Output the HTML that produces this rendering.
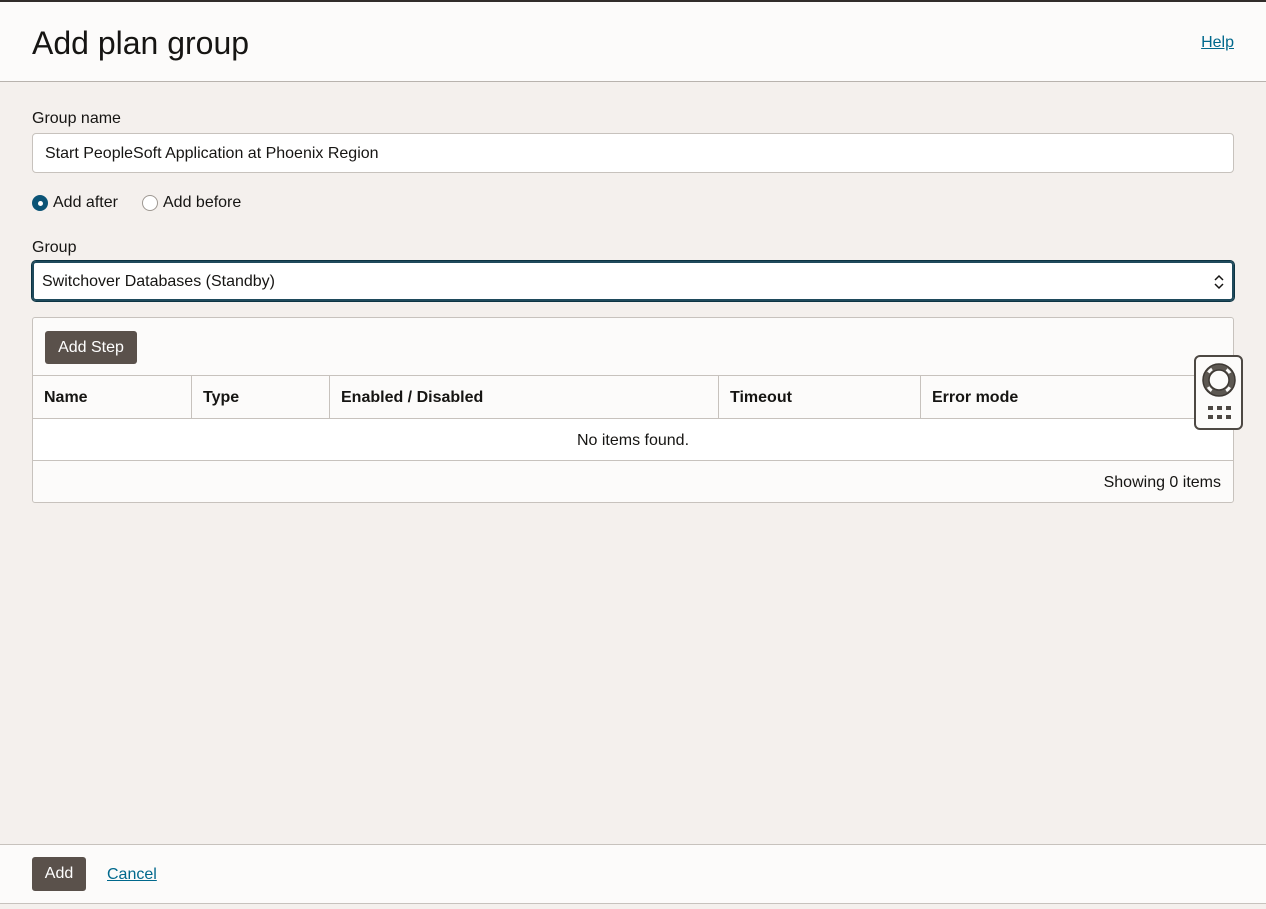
<!DOCTYPE html>
<html><head><style>
*{box-sizing:border-box;margin:0;padding:0}
body{width:1266px;height:909px;background:#f4f0ed;font-family:"Liberation Sans",sans-serif;color:#161513;position:relative;overflow:hidden;font-size:16px}
.top{position:absolute;top:0;left:0;width:1266px;height:2px;background:#312d2a}
.hdr{position:absolute;top:2px;left:0;width:1266px;height:80px;background:#fcfbfa;border-bottom:1px solid #b8b3ae}
.hdr h1{position:absolute;left:32px;top:23px;font-size:32px;font-weight:400}
.hdr a{position:absolute;right:32px;top:32px;color:#00688c;text-decoration:underline;font-size:16px}
.lbl{position:absolute;left:32px;font-size:16px}
.inp{position:absolute;left:32px;width:1202px;height:40px;background:#fff;border:1px solid #c7c2bd;border-radius:4px;padding:0 12px;line-height:40px}
.sel{border:2px solid #1f4a5c;outline:1px solid #0c3443;padding-left:8px;line-height:38px}
.radio{position:absolute;top:194px;display:flex;align-items:center;gap:5px;line-height:18px}
.r{width:16px;height:16px;border-radius:50%;border:1px solid #9e9892;background:#fff}
.r.on{background:#0b5476;border:none;display:flex;align-items:center;justify-content:center}
.r.on:after{content:"";width:5px;height:5px;border-radius:50%;background:#fff}
.tbl{position:absolute;left:32px;top:317px;width:1202px;height:186px;background:#fcfbfa;border:1px solid #c7c2bd;border-radius:3px}
.btn{position:absolute;background:#5a514b;color:#fff;border-radius:3px;font-size:16px;display:flex;align-items:center;justify-content:center}
.row{position:absolute;left:0;width:1200px;border-top:1px solid #c7c2bd}
.th{position:absolute;top:0;height:42px;line-height:44px;font-weight:700;padding-left:11px;border-right:1px solid #c7c2bd}
.foot{position:absolute;top:844px;left:0;width:1266px;height:60px;background:#fcfbfa;border-top:1px solid #c7c2bd;border-bottom:1px solid #c7c2bd}
.widget{position:absolute;left:1194px;top:355px;width:49px;height:75px;background:#fcfbfa;border:2px solid #4d4843;border-radius:6px}
</style></head><body>
<div class="top"></div>
<div class="hdr"><h1>Add plan group</h1><a>Help</a></div>
<div class="lbl" style="top:110px">Group name</div>
<div class="inp" style="top:133px">Start PeopleSoft Application at Phoenix Region</div>
<div class="radio" style="left:32px"><div class="r on"></div>Add after</div>
<div class="radio" style="left:142px"><div class="r"></div>Add before</div>
<div class="lbl" style="top:239px">Group</div>
<div class="inp sel" style="top:261px">Switchover Databases (Standby)
<svg style="position:absolute;right:8px;top:11px" width="10" height="16" viewBox="0 0 10 16"><path d="M1 6l4-4 4 4M1 10l4 4 4-4" fill="none" stroke="#161513" stroke-width="1.5"/></svg></div>
<div class="tbl">
<div class="btn" style="left:12px;top:13px;width:92px;height:33px">Add Step</div>
<div class="row" style="top:57px;height:43px">
<div class="th" style="left:0;width:159px">Name</div>
<div class="th" style="left:159px;width:138px">Type</div>
<div class="th" style="left:297px;width:389px">Enabled / Disabled</div>
<div class="th" style="left:686px;width:202px">Timeout</div>
<div class="th" style="left:888px;width:312px;border-right:none">Error mode</div>
</div>
<div class="row" style="top:100px;height:42px;line-height:44px;text-align:center;background:#fff">No items found.</div>
<div class="row" style="top:142px;height:42px;line-height:44px;text-align:right;padding-right:12px">Showing 0 items</div>
</div>
<div class="widget">
<svg style="position:absolute;left:6px;top:6px" width="34" height="34" viewBox="0 0 34 34"><circle cx="17" cy="17" r="13" fill="none" stroke="#5d5852" stroke-width="6"/><circle cx="17" cy="17" r="13" fill="none" stroke="#fcfbfa" stroke-width="3" stroke-dasharray="5 15.4" stroke-dashoffset="-7.7"/><circle cx="17" cy="17" r="16" fill="none" stroke="#3d3833" stroke-width="1.5"/><circle cx="17" cy="17" r="10" fill="none" stroke="#3d3833" stroke-width="1.5"/></svg>
<svg style="position:absolute;left:12px;top:49px" width="24" height="16"><g fill="#4d4843"><rect x="0" y="0" width="5" height="4"/><rect x="9" y="0" width="5" height="4"/><rect x="18" y="0" width="5" height="4"/><rect x="0" y="9" width="5" height="4"/><rect x="9" y="9" width="5" height="4"/><rect x="18" y="9" width="5" height="4"/></g></svg>
</div>
<div class="foot">
<div class="btn" style="left:32px;top:12px;width:54px;height:34px">Add</div>
<a style="position:absolute;left:107px;top:21px;color:#00688c;text-decoration:underline">Cancel</a>
</div>
</body></html>
